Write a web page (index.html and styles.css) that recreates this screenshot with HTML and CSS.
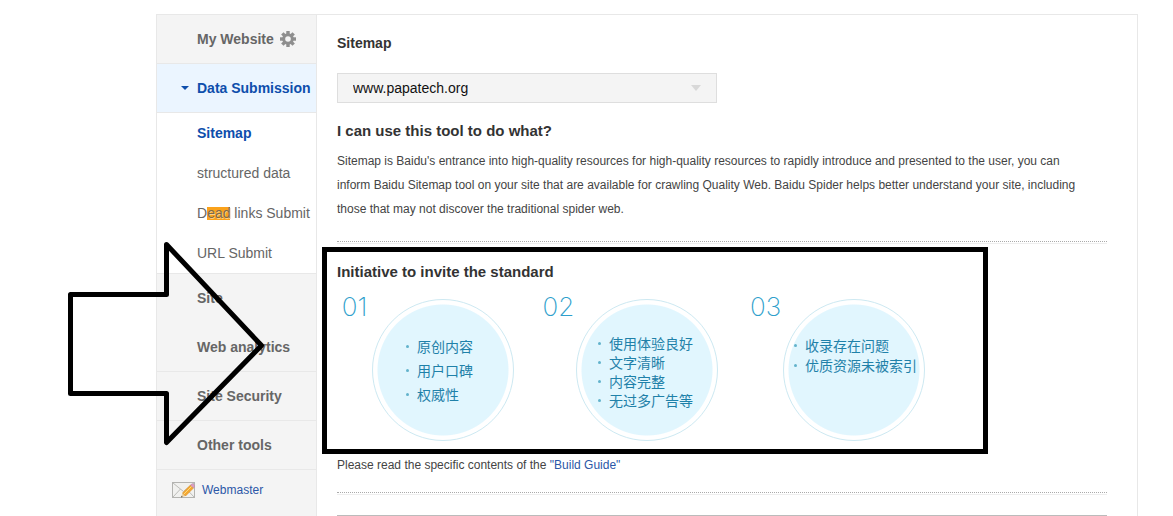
FILE: index.html
```html
<!DOCTYPE html>
<html lang="en">
  <head>
    <meta charset="UTF-8" />
    <title>Sitemap</title>
    <link rel="stylesheet" href="styles.css">
  </head>
  <body>
    <div class="container">
      <nav class="sidebar">
        <a class="item" href="#">My Website
          <svg class="gear" viewBox="0 0 16 16" width="16" height="16">
            <g fill="#8e8e8e">
              <rect x="6.3" y="0" width="3.4" height="16" />
              <rect x="6.3" y="0" width="3.4" height="16" transform="rotate(45 8 8)" />
              <rect x="6.3" y="0" width="3.4" height="16" transform="rotate(90 8 8)" />
              <rect x="6.3" y="0" width="3.4" height="16" transform="rotate(135 8 8)" />
              <circle cx="8" cy="8" r="5.8" />
            </g>
            <circle cx="8" cy="8" r="2.8" fill="#f4f4f4" />
          </svg>
        </a>
        <a class="item open" href="#">Data Submission</a>
        <div class="submenu">
          <a class="current" href="#">Sitemap</a>
          <a href="#">structured data</a>
          <a href="#">D<mark>ead</mark> links Submit</a>
          <a href="#">URL Submit</a>
        </div>
        <a class="item plain" href="#">Site</a>
        <a class="item" href="#">Web analytics</a>
        <a class="item" href="#">Site Security</a>
        <a class="item" href="#">Other tools</a>
        <a class="mail" href="#">
          <svg viewBox="0 0 24 18" width="24" height="18">
            <rect x="0.5" y="1.5" width="22" height="15" fill="#f1f1ef" stroke="#b3b3b0" />
            <path d="M1 2l10.500 8.500L22 2M1 16l7.500-8M22 16l-7.500-8" fill="none" stroke="#bcbcb9" />
            <path d="M9 16.500l1.500-4.500 3 3z" fill="#e9cf9f" />
            <path d="M10.500 12L18.500 4l3 3-8 8z" fill="#f4a832" stroke="#d98a1c" stroke-width="0.600" />
            <path d="M11.800 13.200L19.800 5.200" stroke="#ffdb7c" />
            <path d="M18.500 4l1-1q1-.8 2.200.3t.8 2.700l-1 1z" fill="#dc9cc0" stroke="#b687a6" stroke-width="0.500" />
            <path d="M9 16.500l.6-1.700 1.100 1.100z" fill="#444" />
          </svg>
          Webmaster</a>
      </nav>

      <main class="content">
        <h1><label for="site">Sitemap</label></h1>
        <div class="select">
          <select id="site">
            <option>www.papatech.org</option>
          </select>
        </div>

        <h2>I can use this tool to do what?</h2>
        <p>
          Sitemap is Baidu's entrance into high-quality resources for high-quality resources to rapidly introduce and presented to the user, you can inform Baidu Sitemap tool on your site that are available for crawling Quality Web. Baidu Spider helps better understand your site, including those that may not discover the traditional spider web.
        </p>
        <hr class="dotted" />

        <section class="standard">
          <h2>Initiative to invite the standard</h2>
          <div class="steps" lang="zh">
            <div class="step">
              <span class="number">01</span>
              <div class="circle">
                <ul class="wide">
                  <li>原创内容</li>
                  <li>用户口碑</li>
                  <li>权威性</li>
                </ul>
              </div>
            </div>
            <div class="step">
              <span class="number">02</span>
              <div class="circle">
                <ul class="tight">
                  <li>使用体验良好</li>
                  <li>文字清晰</li>
                  <li>内容完整</li>
                  <li>无过多广告等</li>
                </ul>
              </div>
            </div>
            <div class="step">
              <span class="number">03</span>
              <div class="circle">
                <ul class="top">
                  <li>收录存在问题</li>
                  <li>优质资源未被索引</li>
                </ul>
              </div>
            </div>
          </div>
          <div class="frame"></div>
        </section>

        <p class="note">Please read the specific contents of the <a href="#">"Build Guide"</a></p>
        <hr class="dotted" />
        <hr class="solid" />
      </main>
    </div>

    <!-- Arrow pointing at the framed section -->
    <svg class="arrow" viewBox="0 0 200 208" width="200" height="208">
      <path d="M4.500 54.500H100.500V4.500L195.500 105.500L100.500 202.500V153.500H4.500Z" fill="none" stroke="#000" stroke-width="5" stroke-linejoin="round" />
    </svg>
  </body>
</html>
```

FILE: styles.css
```css
body {
  font-family: "Liberation Sans", Arial, "Noto Sans CJK SC", sans-serif;
  margin: 0;
  padding: 14px 35px 0 156px;
  min-height: 100vh;
  box-sizing: border-box;
  display: flex;
  position: relative;
  background-color: #fff;
}
a {
  color: #2b57a7;
  text-decoration: none;
}
.container {
  display: flex;
  flex: 1;
  border: 1px solid #e8e8e8;
  border-bottom: 0;
}

/* Sidebar */
.sidebar {
  width: 159px;
  flex: none;
  background-color: #f4f4f4;
  border-right: 1px solid #e8e8e8;
  font-size: 14px;
}
.item {
  display: flex;
  align-items: center;
  gap: 6px;
  height: 48px;
  padding-left: 40px;
  border-bottom: 1px solid #e8e8e8;
  font-weight: bold;
  color: #666;
  white-space: nowrap;
}
.item.plain {
  border-color: #f4f4f4;
}
.item.open {
  padding-left: 24px;
  gap: 8px;
  background-color: #ebf5ff;
  color: #0e4eac;
}
.item.open::before {
  content: "";
  border: 4px solid transparent;
  border-top-color: #0e4eac;
  border-bottom: 0;
}
.submenu {
  background-color: #fff;
  border-bottom: 1px solid #e8e8e8;
}
.submenu a {
  display: block;
  padding-left: 40px;
  line-height: 40px;
  color: #666;
  white-space: nowrap;
}
.submenu .current {
  font-weight: bold;
  color: #0e4eac;
}
mark {
  display: inline-block;
  line-height: 13px;
  background-color: #faa21b;
  color: #7d6a4a;
  text-shadow: 1px 1px 0 #fbd08a;
}
.mail {
  display: flex;
  align-items: center;
  gap: 6px;
  height: 40px;
  padding-left: 15px;
  font-size: 12px;
}

/* Main column */
.content {
  flex: 1;
  padding: 16px 30px 0 20px;
  color: #444;
}
h1,
h2 {
  margin: 0;
  font-size: 14px;
  line-height: 24px;
  color: #333;
}
h2 {
  font-size: 15px;
}
.select {
  position: relative;
  width: 380px;
  max-width: 100%;
  margin: 18px 0 16px;
}
.select::after {
  content: "";
  position: absolute;
  top: 12px;
  right: 16px;
  border: 5px solid transparent;
  border-top: 6px solid #d8d8d8;
  border-bottom: 0;
  pointer-events: none;
}
select {
  display: block;
  width: 100%;
  height: 30px;
  padding: 0 15px;
  appearance: none;
  border: 1px solid #dedede;
  border-radius: 0;
  background-color: #f4f4f4;
  color: #111;
  font-family: inherit;
  font-size: 14px;
}
p {
  margin: 6px 0 20px;
  padding-right: 15px;
  font-size: 12px;
  line-height: 24px;
}
.note {
  margin-bottom: 15px;
}
hr {
  margin: 0;
  border: 0;
}
.dotted {
  height: 1px;
  border-top: 1px dotted #aaa;
  border-bottom: 1px solid #eee;
}
.solid {
  margin-top: 20px;
  border-top: 1px solid #bbb;
}

/* Framed circles */
.standard {
  position: relative;
  padding: 16px 0 6px;
}
.frame {
  position: absolute;
  top: 3px;
  bottom: -7px;
  left: -15px;
  width: 656px;
  border: 5px solid #000;
  pointer-events: none;
}
.steps {
  display: grid;
  grid-template-columns: 204px 207px 177px;
  margin-top: 15px;
}
.step {
  display: flex;
}
.number {
  width: 35px;
  flex: none;
  font-family: Inter, sans-serif;
  font-weight: 200;
  font-size: 26px;
  line-height: 16px;
  text-align: center;
  color: #2f9fcc;
}
.circle {
  display: flex;
  align-items: center;
  width: 130px;
  height: 130px;
  padding: 5px;
  border: 1px solid #cde9f2;
  border-radius: 50%;
  background: radial-gradient(circle, #e1f6fe 65px, #fff 66px);
}
ul {
  margin: 0;
  padding: 0;
  list-style: none;
  font-family: "Noto Sans CJK SC", sans-serif;
  font-size: 14px;
  color: #1f81a9;
}
li {
  display: flex;
  align-items: center;
  white-space: nowrap;
}
li::before {
  content: "";
  width: 3px;
  height: 3px;
  margin-right: 8px;
  border-radius: 50%;
  background-color: #62b2cc;
}
.wide {
  padding-left: 28px;
  line-height: 24px;
}
.tight {
  padding: 4px 0 0 16px;
  line-height: 19px;
}
.top {
  align-self: flex-start;
  padding: 30px 0 0 5px;
  line-height: 20px;
}

.arrow {
  position: absolute;
  top: 240px;
  left: 66px;
  pointer-events: none;
}
```
